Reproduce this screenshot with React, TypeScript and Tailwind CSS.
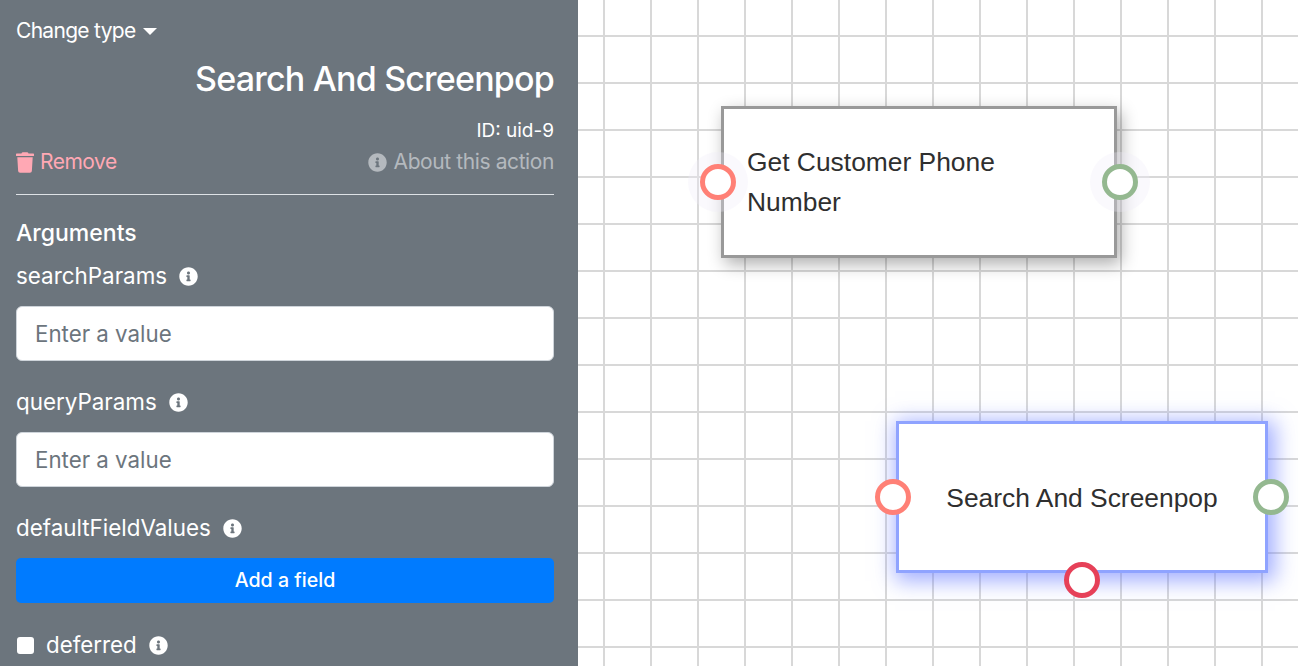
import React from "react";
import { FaInfoCircle, FaTrash } from "react-icons/fa";

const FieldLabel: React.FC<{ name: string; className?: string }> = ({ name, className }) => (
  <div className={`flex h-7 items-center gap-3 text-[22.4px] ${className ?? ""}`}>
    <span>{name}</span>
    <FaInfoCircle className="size-[19px] text-white" />
  </div>
);

const ValueInput: React.FC = () => (
  <input
    readOnly
    placeholder="Enter a value"
    className="mt-4 block h-[55px] w-full rounded-[6px] border border-[#ced4da] bg-white px-[18px] text-[22.3px] text-[#495057] outline-none placeholder:text-[#6c757d]"
  />
);

const Port: React.FC<{ color: string; halo?: boolean; className: string }> = ({ color, halo, className }) => (
  <div className={`absolute size-9 rounded-full border-[5px] bg-white ${color} ${halo ? "shadow-[0_0_0_12px_rgba(240,235,248,0.3)]" : ""} ${className}`} />
);

export default function App() {
  return (
    <div className="flex h-[666px] w-[1298px] overflow-hidden bg-white font-['Inter',sans-serif]">
      <aside className="h-full w-[578px] shrink-0 bg-[#6c757d] pl-4 pr-6 text-white">
        <div className="flex h-[62px] items-center gap-2 text-[21px] tracking-[-0.7px]">
          <span>Change type</span>
          <span className="mt-[1px] size-0 border-x-[7px] border-t-[7px] border-x-transparent border-t-white" />
        </div>
        <h1 className="flex h-8 items-center justify-end text-[34px] font-medium tracking-[-0.8px]">Search And Screenpop</h1>
        <div className="mt-[25px] flex h-6 items-center justify-end text-[19px]">ID: uid-9</div>
        <div className="mt-[5px] flex h-7 items-center justify-between text-[21px]">
          <span className="flex items-center gap-[6px] tracking-[-0.5px] text-[#ffa8b4]">
            <FaTrash className="h-[21px] w-[18px]" />
            Remove
          </span>
          <span className="flex items-center gap-[7px] tracking-[-0.4px] text-[#b4b9be]">
            <FaInfoCircle className="size-[19px]" />
            About this action
          </span>
        </div>
        <hr className="mt-[18px] border-t-[1.5px] border-[#dee2e6]" />
        <h2 className="mt-6 flex h-7 items-center text-[23px] font-medium">Arguments</h2>
        <FieldLabel name="searchParams" className="mt-[15px]" />
        <ValueInput />
        <FieldLabel name="queryParams" className="mt-[27px]" />
        <ValueInput />
        <FieldLabel name="defaultFieldValues" className="mt-[27px]" />
        <button className="mt-4 block h-[45px] w-full rounded-[5px] bg-[#007bff] pt-px text-[19.6px] font-medium text-white">Add a field</button>
        <div className="mt-7 flex h-7 items-center text-[22.3px]">
          <span className="ml-px size-[17px] rounded-[3px] bg-white" />
          <span className="ml-3">deferred</span>
          <FaInfoCircle className="ml-3 size-[19px] text-white" />
        </div>
      </aside>

      <main className="relative h-full flex-1 overflow-hidden bg-white bg-[linear-gradient(to_right,#d8d8d8_2px,transparent_2px),linear-gradient(to_bottom,#d8d8d8_2px,transparent_2px)] bg-[size:47px_47px] bg-[position:25px_35px] font-['Liberation_Sans',sans-serif] text-[#2f2f2f]">
        <div className="absolute left-[143px] top-[106px] flex h-[152px] w-[396px] items-center border-[3px] border-[#999999] bg-white pl-[23px] pr-[60px] text-[26.4px] leading-[40px] shadow-[4px_6px_16px_rgba(0,0,0,0.32)]">
          Get Customer Phone Number
        </div>
        <Port color="border-[#ff8076]" halo className="left-[122px] top-[164px]" />
        <Port color="border-[#94b890]" halo className="left-[524px] top-[164px]" />

        <div className="absolute left-[318px] top-[421px] flex h-[152px] w-[372px] items-center justify-center border-[3px] border-[#8fa3ff] bg-white pt-1 text-[26.4px] shadow-[3px_4px_20px_4px_rgba(100,120,255,0.6)]">
          Search And Screenpop
        </div>
        <Port color="border-[#ff8076]" className="left-[297px] top-[479px]" />
        <Port color="border-[#94b890]" className="left-[675px] top-[479px]" />
        <Port color="border-[#e64058]" className="left-[486px] top-[562px]" />
      </main>
    </div>
  );
}
